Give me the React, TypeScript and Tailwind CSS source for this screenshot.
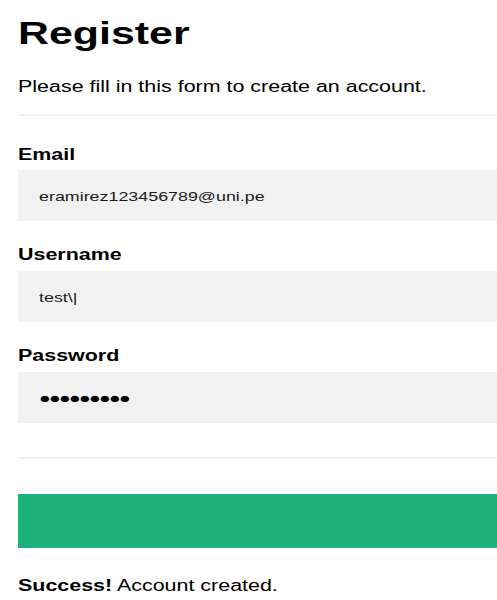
import React from "react";

function W({ children, className = "" }: { children: React.ReactNode; className?: string }) {
  return (
    <span className={"inline-block origin-left scale-x-[1.34] whitespace-nowrap " + className}>
      {children}
    </span>
  );
}

function Field({
  label,
  value,
  top,
  gap,
  mask,
}: {
  label: string;
  value: string;
  top: string;
  gap: string;
  mask?: boolean;
}) {
  return (
    <div className={top}>
      <div className="text-[16px] leading-[24px] font-bold text-black">
        <W>{label}</W>
      </div>
      <div className={gap + " h-[51px] bg-[#f1f1f1] pl-[21px] flex items-center pt-[3px]"}>
        {mask ? (
          <W className="text-[14.5px] leading-[16px] tracking-[-1.3px] text-black -mt-[3px]">{value}</W>
        ) : (
          <W className="text-[13.33px] leading-[16px] text-[#1a1a1a]">{value}</W>
        )}
      </div>
    </div>
  );
}

export default function App() {
  return (
    <div
      className="min-h-[600px] bg-white pl-[18px] pt-[13px] overflow-hidden"
      style={{ fontFamily: '"Liberation Sans", Arial, sans-serif' }}
    >
      <h1 className="text-[32px] leading-[40px] font-bold text-black">
        <W>Register</W>
      </h1>
      <p className="mt-[22px] text-[16px] leading-[24px] text-black">
        <W>Please fill in this form to create an account.</W>
      </p>
      <div className="mt-[15px] h-[2px] bg-[#f1f1f1]" />

      <Field top="mt-[27px]" gap="mt-[3px]" label="Email" value="eramirez123456789@uni.pe" />
      <Field top="mt-[22px]" gap="mt-[4px]" label="Username" value="test\|" />
      <Field top="mt-[22px]" gap="mt-[4px]" label="Password" value="●●●●●●●●●" mask />

      <div className="mt-[34px] h-[2px] bg-[#f1f1f1]" />

      <button type="button" className="mt-[35px] block w-full h-[54px] bg-[#1db27c]" />

      <p className="mt-[26px] text-[16px] leading-[24px] text-black">
        <W>
          <b>Success!</b> Account created.
        </W>
      </p>
    </div>
  );
}
